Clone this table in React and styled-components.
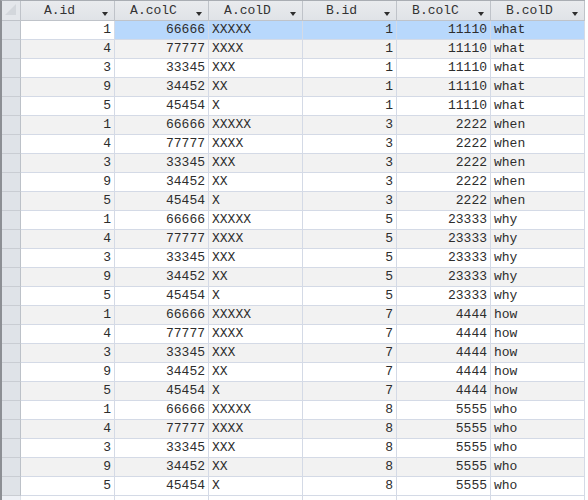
import styled, { createGlobalStyle } from "styled-components";

const GlobalStyle = createGlobalStyle`
  html, body {
    margin: 0;
    padding: 0;
    background: #ffffff;
  }
  body {
    font-family: "Liberation Mono", "DejaVu Sans Mono", monospace;
  }
`;

const Sheet = styled.div`
  width: 585px;
  height: 500px;
  overflow: hidden;
  border-top: 1px solid #a9adb3;
  border-left: 2px solid #8c8f94;
  box-sizing: border-box;
  background: #ffffff;
`;

const Row = styled.div`
  display: grid;
  grid-template-columns: 19px repeat(6, 94px);
  height: ${(p) => (p.$head ? 20 : 19)}px;
`;

const Corner = styled.div`
  position: relative;
  box-sizing: border-box;
  background: #e4e7eb;
  border-right: 1px solid #bfc3c9;
  border-bottom: 1px solid #bfc3c9;

  &::after {
    content: "";
    position: absolute;
    left: 3px;
    top: 3px;
    width: 0;
    height: 0;
    border-left: 11px solid transparent;
    border-bottom: 11px solid #d3d7dc;
  }
`;

const HeadCell = styled.div`
  position: relative;
  box-sizing: border-box;
  background: linear-gradient(#e9ebee, #e0e3e7);
  border-right: 1px solid #bfc3c9;
  border-bottom: 1px solid #bfc3c9;
  padding-right: 16px;
  text-align: center;
  font-size: 13px;
  line-height: 19px;
  color: #333333;
  white-space: nowrap;
`;

const Arrow = styled.span`
  position: absolute;
  right: 6px;
  top: 11px;
  width: 0;
  height: 0;
  border-left: 3.5px solid transparent;
  border-right: 3.5px solid transparent;
  border-top: 4px solid #2e2e2e;
`;

const RowHead = styled.div`
  box-sizing: border-box;
  background: ${(p) => (p.$filler ? "#eef1f6" : "#dfe3e8")};
  border-right: 1px solid ${(p) => (p.$filler ? "#dfe3ea" : "#bcc1c8")};
  border-bottom: ${(p) => (p.$filler ? "none" : "1px solid #c9cdd3")};
`;

const Cell = styled.div`
  box-sizing: border-box;
  background: ${(p) => p.$bg};
  border-right: 1px solid #d4dae6;
  border-bottom: ${(p) => (p.$filler ? "none" : "1px solid #d4dae6")};
  padding: 0 3px 0 3px;
  text-align: ${(p) => (p.$num ? "right" : "left")};
  font-size: 13px;
  line-height: 18px;
  color: #2d2d2d;
  white-space: nowrap;
  overflow: hidden;
`;

const aRows = [
  [1, 66666, "XXXXX"],
  [4, 77777, "XXXX"],
  [3, 33345, "XXX"],
  [9, 34452, "XX"],
  [5, 45454, "X"],
];

const bRows = [
  [1, 11110, "what"],
  [3, 2222, "when"],
  [5, 23333, "why"],
  [7, 4444, "how"],
  [8, 5555, "who"],
];

const rows = [];
bRows.forEach((b) => {
  aRows.forEach((a) => rows.push([...a, ...b]));
});

const columns = ["A.id", "A.colC", "A.colD", "B.id", "B.colC", "B.colD"];
const numeric = [true, true, false, true, true, false];

function background(rowIndex, colIndex) {
  if (rowIndex === 0) return colIndex === 0 ? "#ffffff" : "#b8d8fc";
  return rowIndex % 2 === 1 ? "#f2f2f2" : "#ffffff";
}

export default function App() {
  return (
    <>
      <GlobalStyle />
      <Sheet>
        <Row $head>
          <Corner />
          {columns.map((c) => (
            <HeadCell key={c}>
              {c}
              <Arrow />
            </HeadCell>
          ))}
        </Row>
        {rows.map((r, i) => (
          <Row key={i}>
            <RowHead />
            {r.map((v, j) => (
              <Cell key={j} $num={numeric[j]} $bg={background(i, j)}>
                {v}
              </Cell>
            ))}
          </Row>
        ))}
        <Row>
          <RowHead $filler />
          {columns.map((c) => (
            <Cell key={c} $filler $bg="#ffffff" />
          ))}
        </Row>
      </Sheet>
    </>
  );
}
